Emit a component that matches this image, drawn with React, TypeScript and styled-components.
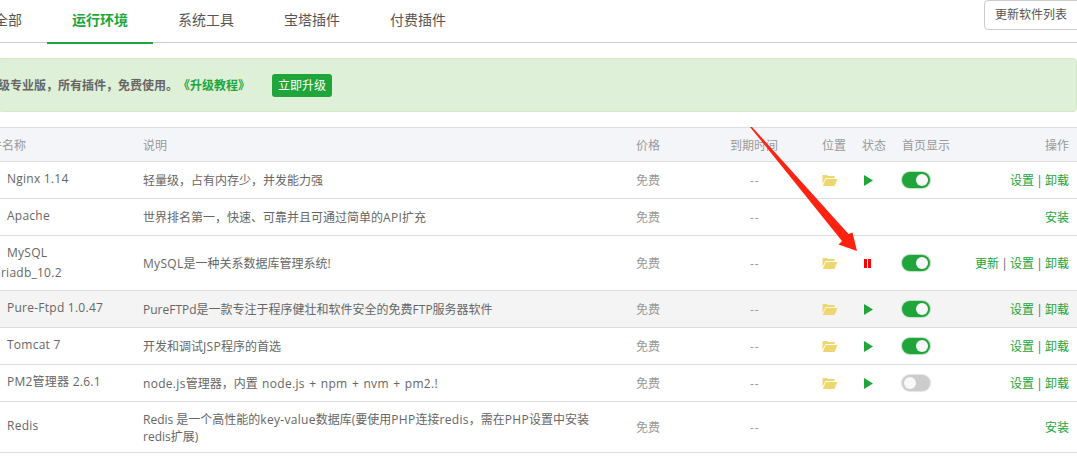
import React from "react";
import styled, { createGlobalStyle } from "styled-components";

const Global = createGlobalStyle`
  html, body {
    margin: 0;
    padding: 0;
    background: #fff;
    overflow: hidden;
  }
  body {
    font-family: "Open Sans", "Noto Sans CJK SC", sans-serif;
    font-size: 12px;
    color: #666;
  }
`;

const Page = styled.div`
  position: relative;
  width: 1077px;
  height: 460px;
  overflow: hidden;
`;

const TabBar = styled.div`
  display: flex;
  justify-content: space-between;
  height: 42px;
  border-bottom: 1px solid #ccc;
`;

const Tabs = styled.div`
  display: flex;
  margin-left: -31px;
`;

const Tab = styled.div<{ $active?: boolean }>`
  height: 44px;
  line-height: 40px;
  padding: 0 25px;
  font-size: 14px;
  box-sizing: border-box;
  color: ${(p) => (p.$active ? "#20a53a" : "#555")};
  font-weight: ${(p) => (p.$active ? 700 : 400)};
  border-bottom: ${(p) => (p.$active ? "2px solid #20a53a" : "none")};
`;

const RefreshButton = styled.div`
  box-sizing: border-box;
  width: 98px;
  height: 30px;
  margin-right: -5px;
  padding-left: 10px;
  border: 1px solid #ccc;
  border-radius: 4px;
  line-height: 28px;
  color: #555;
`;

const Banner = styled.div`
  display: flex;
  align-items: center;
  box-sizing: border-box;
  height: 54px;
  margin: 15px 0 15px -2px;
  background: #dff0d8;
  border: 1px solid #d6e9c6;
  border-radius: 4px;
  font-weight: 700;
  color: #666;
`;

const BannerText = styled.span`
  margin-left: -13px;
`;

const BannerLink = styled.span`
  color: #20a53a;
`;

const UpgradeButton = styled.span`
  margin-left: 22px;
  padding: 0 6px;
  height: 23px;
  line-height: 23px;
  border-radius: 3px;
  background: #20a53a;
  color: #fff;
  font-weight: 400;
`;

const grid = `
  display: grid;
  grid-template-columns: 143px 493px 94px 92px 40px 40px 70px 1fr;
  align-items: center;
  box-sizing: border-box;
  border-bottom: 1px solid #ddd;
`;

const HeadRow = styled.div`
  ${grid}
  height: 35px;
  background: #f4f5f9;
  border-top: 1px solid #ddd;
  color: #999;
`;

const Row = styled.div<{ $height: number; $shaded?: boolean }>`
  ${grid}
  height: ${(p) => p.$height}px;
  background: ${(p) => (p.$shaded ? "#f4f4f4" : "#fff")};
`;

const HeadName = styled.div`
  margin-left: -22px;
  white-space: nowrap;
`;

const Name = styled.div<{ $double?: boolean }>`
  padding: 0 0 ${(p) => (p.$double ? 0 : 2)}px 7px;
  line-height: 20px;
  letter-spacing: 0.25px;
  white-space: nowrap;
`;

const NameSecond = styled.div`
  margin-left: -24px;
`;

const Desc = styled.div`
  width: 465px;
  padding-top: 1px;
  line-height: 17px;
`;

const Lat = styled.span`
  letter-spacing: 0.3px;
  word-spacing: 1px;
`;

const Price = styled.div`
  color: #999;
`;

const Expire = styled.div`
  padding-left: 20px;
  letter-spacing: 1px;
  color: #999;
`;

const Cell = styled.div<{ $inset?: number }>`
  display: flex;
  align-items: center;
  height: 16px;
  padding-left: ${(p) => p.$inset || 0}px;
`;

const HeadCell = styled.div`
  white-space: nowrap;
`;

const Actions = styled.div<{ $head?: boolean }>`
  padding-right: 8px;
  text-align: right;
  white-space: nowrap;
  color: ${(p) => (p.$head ? "#999" : "#20a53a")};
`;

const Sep = styled.span`
  display: inline-block;
  width: 11px;
  text-align: center;
  color: #666;
`;

const Toggle = styled.div<{ $on?: boolean }>`
  position: relative;
  box-sizing: border-box;
  width: 28px;
  height: 16px;
  border-radius: 8px;
  background: ${(p) => (p.$on ? "#20a53a" : "#ccc")};
  box-shadow: 0 0 1px 1px ${(p) => (p.$on ? "#bcdcc3" : "#e4e4e4")};

  &::after {
    content: "";
    position: absolute;
    top: 2px;
    left: ${(p) => (p.$on ? "14px" : "2px")};
    width: 12px;
    height: 12px;
    border-radius: 50%;
    background: #f8f8f8;
  }
`;

const Arrow = styled.svg`
  position: absolute;
  left: 0;
  top: 0;
  pointer-events: none;
`;

const Folder = () => (
  <svg width="16" height="12" viewBox="0 0 16 12">
    <path d="M0.5 2 Q0.5 1 1.5 1 H5 L6 2 H12.5 V4 H3.5 L0.5 10 Z" fill="#f0d66e" />
    <path d="M3.8 5 H15.5 L12.5 12 H0.8 Z" fill="#f0d66e" />
  </svg>
);

const Play = () => (
  <svg width="9" height="11" viewBox="0 0 9 11">
    <path d="M0 0 L9 5.5 L0 11 Z" fill="#20a53a" />
  </svg>
);

const Pause = () => (
  <svg width="7" height="9" viewBox="0 0 7 9">
    <rect x="0" width="3" height="9" fill="#f00" />
    <rect x="4" width="3" height="9" fill="#f00" />
  </svg>
);

const Links = ({ update }: { update?: boolean }) => (
  <Actions>
    {update && (
      <>
        更新<Sep>|</Sep>
      </>
    )}
    设置<Sep>|</Sep>卸载
  </Actions>
);

const rows = [
  { h: 37, name: "Nginx 1.14", desc: "轻量级，占有内存少，并发能力强", on: true, state: "run" },
  { h: 37, name: "Apache", desc: <>世界排名第一，快速、可靠并且可通过简单的<Lat>API</Lat>扩充</> },
  { h: 55, name: "MySQL", second: "Mariadb_10.2", desc: <><Lat>MySQL</Lat>是一种关系数据库管理系统!</>, on: true, state: "stop", update: true },
  { h: 37, name: "Pure-Ftpd 1.0.47", desc: "PureFTPd是一款专注于程序健壮和软件安全的免费FTP服务器软件", on: true, state: "run", shaded: true },
  { h: 37, name: "Tomcat 7", desc: <>开发和调试<Lat>JSP</Lat>程序的首选</>, on: true, state: "run" },
  { h: 37, name: "PM2管理器 2.6.1", desc: <><Lat>node.js</Lat>管理器，内置<Lat> node.js + npm + nvm + pm2.!</Lat></>, on: false, state: "run" },
  { h: 51, name: "Redis", desc: <>Redis 是一个高性能的<Lat>key-value</Lat>数据库(要使用<Lat>PHP</Lat>连接<Lat>redis</Lat>，需在<Lat>PHP</Lat>设置中安装redis扩展)</> },
];

export default function App() {
  return (
    <Page>
      <Global />
      <TabBar>
        <Tabs>
          <Tab>全部</Tab>
          <Tab $active>运行环境</Tab>
          <Tab>系统工具</Tab>
          <Tab>宝塔插件</Tab>
          <Tab>付费插件</Tab>
        </Tabs>
        <RefreshButton>更新软件列表</RefreshButton>
      </TabBar>
      <Banner>
        <BannerText>升级专业版，所有插件，免费使用。</BannerText>
        <BannerLink>《升级教程》</BannerLink>
        <UpgradeButton>立即升级</UpgradeButton>
      </Banner>
      <HeadRow>
        <HeadName>软件名称</HeadName>
        <HeadCell>说明</HeadCell>
        <HeadCell>价格</HeadCell>
        <HeadCell>到期时间</HeadCell>
        <HeadCell>位置</HeadCell>
        <HeadCell>状态</HeadCell>
        <HeadCell>首页显示</HeadCell>
        <Actions $head>操作</Actions>
      </HeadRow>
      {rows.map((r) => (
        <Row key={r.name} $height={r.h} $shaded={r.shaded}>
          <Name $double={!!r.second}>
            {r.name}
            {r.second && <NameSecond>{r.second}</NameSecond>}
          </Name>
          <Desc>{r.desc}</Desc>
          <Price>免费</Price>
          <Expire>--</Expire>
          <Cell>{r.state && <Folder />}</Cell>
          <Cell $inset={2}>{r.state === "run" ? <Play /> : r.state === "stop" ? <Pause /> : null}</Cell>
          <Cell>{r.state && <Toggle $on={r.on} />}</Cell>
          {r.state ? <Links update={r.update} /> : <Actions>安装</Actions>}
        </Row>
      ))}
      <Arrow width="1077" height="460" viewBox="0 0 1077 460">
        <path d="M750 127 L752 127 L848.5 234 L852.5 232.5 L857 251 L838.5 244.5 L842 241 Z" fill="#ff2211" />
      </Arrow>
    </Page>
  );
}
